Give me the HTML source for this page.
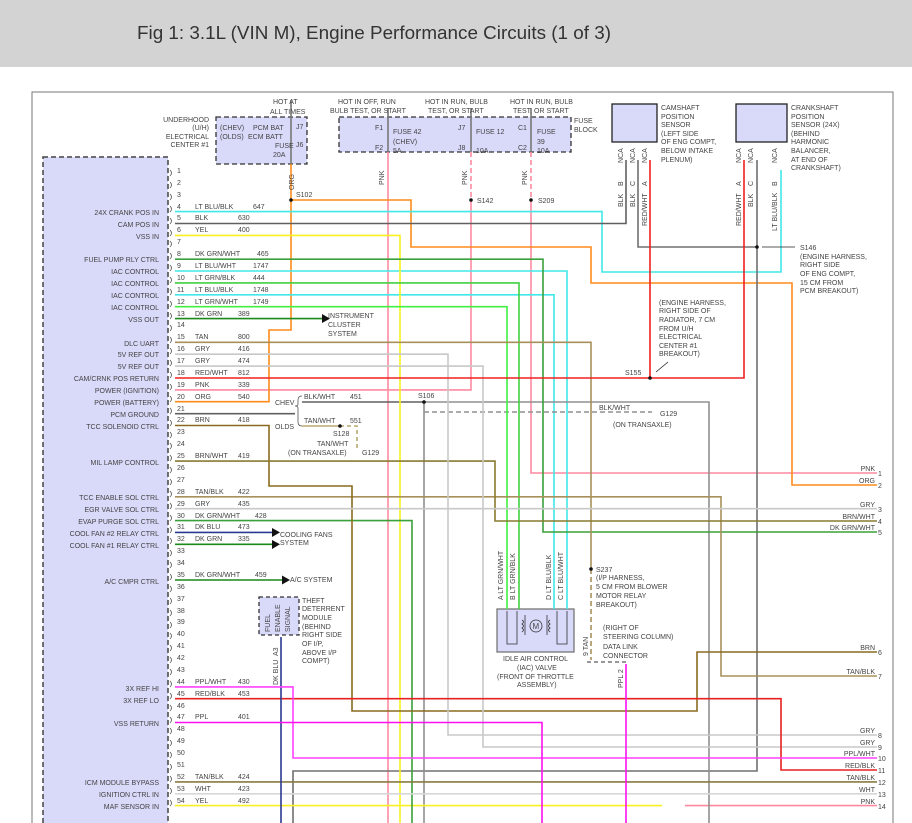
<!DOCTYPE html>
<html><head><meta charset="utf-8"><style>
html,body{margin:0;padding:0;background:#fff;width:912px;height:823px;overflow:hidden}
svg{display:block}
text{font-family:"Liberation Sans",sans-serif;font-size:7px;fill:#444}
.t{font-size:7px}
.r{text-anchor:end}
</style></head><body>
<svg width="912" height="823" viewBox="0 0 912 823" xmlns="http://www.w3.org/2000/svg">
<rect x="0" y="0" width="912" height="67" fill="#d3d3d3"/>
<text x="137" y="39" style="font-size:18px;fill:#333" textLength="474" lengthAdjust="spacingAndGlyphs">Fig 1: 3.1L (VIN M), Engine Performance Circuits (1 of 3)</text>
<rect x="32" y="92" width="861" height="740" fill="none" stroke="#777" stroke-width="1"/>

<!-- PCM box -->
<rect x="43" y="157" width="125" height="680" fill="#d9d9fa" stroke="#444" stroke-width="1.5" stroke-dasharray="5,3"/>

<!-- boxes -->
<rect x="216" y="117" width="91" height="47" fill="#d9d9fa" stroke="#333" stroke-width="1.3" stroke-dasharray="5,3"/>
<rect x="339" y="117" width="232" height="35" fill="#d9d9fa" stroke="#333" stroke-width="1.3" stroke-dasharray="5,3"/>
<rect x="612" y="104" width="45" height="38" fill="#d9d9fa" stroke="#222" stroke-width="1.3"/>
<rect x="736" y="104" width="51" height="38" fill="#d9d9fa" stroke="#222" stroke-width="1.3"/>
<rect x="497" y="609" width="77" height="43" fill="#d9d9fa" stroke="#777" stroke-width="1.3"/>
<rect x="259" y="597" width="40" height="38" fill="#d9d9fa" stroke="#333" stroke-width="1.3" stroke-dasharray="4,3"/>

<g fill="none" stroke-width="1.6">
<!-- pink -->
<polyline stroke="#ff8aa0" points="388,152 388,830"/>
<polyline stroke="#ff8aa0" points="471,152 471,200" stroke-dasharray="5,3"/>
<polyline stroke="#ff8aa0" points="531,152 531,200" stroke-dasharray="5,3"/>
<polyline stroke="#ff8aa0" points="175,389.9 471,389.9 471,200"/>
<polyline stroke="#ff8aa0" points="531,200 531,473 877,473"/>
<polyline stroke="#ff8aa0" points="685,805.6 877,805.6"/>
<!-- orange -->
<polyline stroke="#ff8c1a" points="291,164 291,330 269,330 269,401.7 175,401.7"/>
<polyline stroke="#ff8c1a" points="291,200 411,200 411,247 591,247 591,283 792,283 792,485 877,485"/>
<!-- cyan -->
<polyline stroke="#40e8e8" points="175,211.6 602,211.6 602,272 781,272 781,170"/>
<polyline stroke="#40e8e8" points="175,271 567,271 567,609"/>
<polyline stroke="#40e8e8" points="175,294.8 554,294.8 554,609"/>
<!-- black/dark gray -->
<polyline stroke="#606060" points="175,223.5 626,223.5 626,160"/>
<polyline stroke="#707070" points="638,160 638,247 757,247"/>
<polyline stroke="#707070" points="757,160 757,771 293,771 293,830"/>
<polyline stroke="#606060" points="175,413.7 295,413.7"/>
<polyline stroke="#606060" points="302,402 424,402"/>
<polyline stroke="#909090" points="424,402 709,402 709,830"/>
<polyline stroke="#909090" points="424,402 424,830"/>
<polyline stroke="#909090" points="424,412 652,412" stroke-dasharray="5,3"/>
<!-- yellow -->
<polyline stroke="#f8f020" points="175,235.4 400,235.4 400,830"/>
<polyline stroke="#f8f020" points="175,805.6 662,805.6"/>
<!-- greens -->
<polyline stroke="#3aa03a" points="175,259.2 543,259.2 543,532 877,532"/>
<polyline stroke="#40d040" points="175,282.9 519,282.9 519,609"/>
<polyline stroke="#40f040" points="175,306.7 507,306.7 507,609"/>
<polyline stroke="#1a8a1a" points="175,318.6 322,318.6"/>
<polyline stroke="#3aa03a" points="175,520.6 412,520.6 412,830"/>
<polyline stroke="#1a8a1a" points="175,544.3 272,544.3"/>
<polyline stroke="#1a8a1a" points="175,580 282,580"/>
<!-- tan -->
<polyline stroke="#a8905a" points="175,342.3 591,342.3 591,569"/>
<polyline stroke="#a8905a" points="591,569 591,660" stroke-dasharray="5,3"/>
<polyline stroke="#a8905a" points="175,496.8 721,496.8 721,676 877,676"/>
<polyline stroke="#8a7a40" points="175,781.9 877,781.9"/>
<polyline stroke="#b8a870" points="302,426 340,426"/>
<polyline stroke="#b8a870" points="340,426 357,426 357,448" stroke-dasharray="4,3"/>
<!-- brown -->
<polyline stroke="#8a6a20" points="175,425.5 269,425.5 269,486 352,486 352,711 697,711 697,652 877,652"/>
<polyline stroke="#8a7a30" points="175,461.1 495,461.1 495,521 877,521"/>
<!-- grays -->
<polyline stroke="#c8c8c8" points="175,354.2 448,354.2 448,735 877,735"/>
<polyline stroke="#c8c8c8" points="175,366.1 483,366.1 483,747 877,747"/>
<polyline stroke="#c8c8c8" points="175,508.7 877,508.7"/>
<polyline stroke="#d8d8d8" points="175,793.8 877,793.8"/>
<!-- red -->
<polyline stroke="#f02020" points="175,378 744,378 744,160"/>
<polyline stroke="#f02020" points="650,160 650,378"/>
<polyline stroke="#e82020" points="175,698.7 781,698.7 781,770 877,770"/>
<!-- blue -->
<polyline stroke="#2a3a90" points="175,532.4 272,532.4"/>
<polyline stroke="#2a3a90" points="281,637 281,830"/>
<!-- magenta -->
<polyline stroke="#ff40ff" points="175,686.9 293,686.9 293,758 877,758"/>
<polyline stroke="#ff10f0" points="175,722.5 542,722.5 542,830"/>
<polyline stroke="#ff10f0" points="626,664 626,830"/>
<!-- fuse lines -->
<polyline stroke="#777" points="291,100 291,164"/>
<polyline stroke="#777" points="388,108 388,152"/>
<polyline stroke="#777" points="471,108 471,152"/>
<polyline stroke="#777" points="531,108 531,152"/>
<polyline stroke="#777" points="587,662 628,662" stroke-dasharray="4,3"/>
</g>
<!-- arrows -->
<g fill="#111">
<polygon points="322,314 330,318.6 322,323"/>
<polygon points="272,528 280,532.4 272,537"/>
<polygon points="272,540 280,544.3 272,549"/>
<polygon points="282,575.5 290,580 282,584.5"/>
<circle cx="291" cy="200" r="1.8"/><circle cx="471" cy="200" r="1.8"/><circle cx="531" cy="200" r="1.8"/>
<circle cx="757" cy="247" r="1.8"/><circle cx="650" cy="378" r="1.8"/><circle cx="424" cy="402" r="1.8"/>
<circle cx="340" cy="426" r="1.8"/><circle cx="591" cy="569" r="1.8"/>
</g>
<line x1="762" y1="247" x2="795" y2="247" stroke="#222" stroke-width="0.8"/>
<line x1="656" y1="372" x2="668" y2="362" stroke="#222" stroke-width="0.8"/>

<!-- PCM pin numbers -->
<g>
<text x="177" y="173">1</text><text x="177" y="185">2</text><text x="177" y="197">3</text><text x="177" y="209">4</text><text x="177" y="220">5</text><text x="177" y="232">6</text><text x="177" y="244">7</text><text x="177" y="256">8</text><text x="177" y="268">9</text><text x="177" y="280">10</text><text x="177" y="292">11</text><text x="177" y="304">12</text><text x="177" y="316">13</text><text x="177" y="327">14</text><text x="177" y="339">15</text><text x="177" y="351">16</text><text x="177" y="363">17</text><text x="177" y="375">18</text><text x="177" y="387">19</text><text x="177" y="399">20</text><text x="177" y="411">21</text><text x="177" y="422">22</text><text x="177" y="434">23</text><text x="177" y="446">24</text><text x="177" y="458">25</text><text x="177" y="470">26</text><text x="177" y="482">27</text><text x="177" y="494">28</text><text x="177" y="506">29</text><text x="177" y="518">30</text><text x="177" y="529">31</text><text x="177" y="541">32</text><text x="177" y="553">33</text><text x="177" y="565">34</text><text x="177" y="577">35</text><text x="177" y="589">36</text><text x="177" y="601">37</text><text x="177" y="613">38</text><text x="177" y="624">39</text><text x="177" y="636">40</text><text x="177" y="648">41</text><text x="177" y="660">42</text><text x="177" y="672">43</text><text x="177" y="684">44</text><text x="177" y="696">45</text><text x="177" y="708">46</text><text x="177" y="719">47</text><text x="177" y="731">48</text><text x="177" y="743">49</text><text x="177" y="755">50</text><text x="177" y="767">51</text><text x="177" y="779">52</text><text x="177" y="791">53</text><text x="177" y="803">54</text>
</g>
<g fill="none" stroke="#555" stroke-width="0.8">
<path d="M170,170 q3,3 0,6 M170,182 q3,3 0,6 M170,194 q3,3 0,6 M170,206 q3,3 0,6 M170,218 q3,3 0,6 M170,230 q3,3 0,6 M170,241 q3,3 0,6 M170,253 q3,3 0,6 M170,265 q3,3 0,6 M170,277 q3,3 0,6 M170,289 q3,3 0,6 M170,301 q3,3 0,6 M170,313 q3,3 0,6 M170,325 q3,3 0,6 M170,337 q3,3 0,6 M170,348 q3,3 0,6 M170,360 q3,3 0,6 M170,372 q3,3 0,6 M170,384 q3,3 0,6 M170,396 q3,3 0,6 M170,408 q3,3 0,6 M170,420 q3,3 0,6 M170,432 q3,3 0,6 M170,443 q3,3 0,6 M170,455 q3,3 0,6 M170,467 q3,3 0,6 M170,479 q3,3 0,6 M170,491 q3,3 0,6 M170,503 q3,3 0,6 M170,515 q3,3 0,6 M170,527 q3,3 0,6 M170,538 q3,3 0,6 M170,550 q3,3 0,6 M170,562 q3,3 0,6 M170,574 q3,3 0,6 M170,586 q3,3 0,6 M170,598 q3,3 0,6 M170,610 q3,3 0,6 M170,622 q3,3 0,6 M170,633 q3,3 0,6 M170,645 q3,3 0,6 M170,657 q3,3 0,6 M170,669 q3,3 0,6 M170,681 q3,3 0,6 M170,693 q3,3 0,6 M170,705 q3,3 0,6 M170,717 q3,3 0,6 M170,728 q3,3 0,6 M170,740 q3,3 0,6 M170,752 q3,3 0,6 M170,764 q3,3 0,6 M170,776 q3,3 0,6 M170,788 q3,3 0,6 M170,800 q3,3 0,6"/>
<path d="M302,396 q-4,0 -4,4 v4 q0,2 -3,2 q3,0 3,2 v14 q0,4 4,4"/>
</g>

<!-- function labels -->
<g class="r">
<text class="r" x="159" y="215">24X CRANK POS IN</text>
<text class="r" x="159" y="227">CAM POS IN</text>
<text class="r" x="159" y="239">VSS IN</text>
<text class="r" x="159" y="262">FUEL PUMP RLY CTRL</text>
<text class="r" x="159" y="274">IAC CONTROL</text>
<text class="r" x="159" y="286">IAC CONTROL</text>
<text class="r" x="159" y="298">IAC CONTROL</text>
<text class="r" x="159" y="310">IAC CONTROL</text>
<text class="r" x="159" y="322">VSS OUT</text>
<text class="r" x="159" y="346">DLC UART</text>
<text class="r" x="159" y="357">5V REF OUT</text>
<text class="r" x="159" y="369">5V REF OUT</text>
<text class="r" x="159" y="381">CAM/CRNK POS RETURN</text>
<text class="r" x="159" y="393">POWER (IGNITION)</text>
<text class="r" x="159" y="405">POWER (BATTERY)</text>
<text class="r" x="159" y="417">PCM GROUND</text>
<text class="r" x="159" y="429">TCC SOLENOID CTRL</text>
<text class="r" x="159" y="465">MIL LAMP CONTROL</text>
<text class="r" x="159" y="500">TCC ENABLE SOL CTRL</text>
<text class="r" x="159" y="512">EGR VALVE SOL CTRL</text>
<text class="r" x="159" y="524">EVAP PURGE SOL CTRL</text>
<text class="r" x="159" y="536">COOL FAN #2 RELAY CTRL</text>
<text class="r" x="159" y="548">COOL FAN #1 RELAY CTRL</text>
<text class="r" x="159" y="584">A/C CMPR CTRL</text>
<text class="r" x="159" y="691">3X REF HI</text>
<text class="r" x="159" y="703">3X REF LO</text>
<text class="r" x="159" y="726">VSS RETURN</text>
<text class="r" x="159" y="785">ICM MODULE BYPASS</text>
<text class="r" x="159" y="797">IGNITION CTRL IN</text>
<text class="r" x="159" y="809">MAF SENSOR IN</text>
</g>

<!-- wire labels -->
<g>
<text x="195" y="209">LT BLU/BLK</text><text x="253" y="209">647</text>
<text x="195" y="220">BLK</text><text x="238" y="220">630</text>
<text x="195" y="232">YEL</text><text x="238" y="232">400</text>
<text x="195" y="256">DK GRN/WHT</text><text x="257" y="256">465</text>
<text x="195" y="268">LT BLU/WHT</text><text x="253" y="268">1747</text>
<text x="195" y="280">LT GRN/BLK</text><text x="253" y="280">444</text>
<text x="195" y="292">LT BLU/BLK</text><text x="253" y="292">1748</text>
<text x="195" y="304">LT GRN/WHT</text><text x="253" y="304">1749</text>
<text x="195" y="316">DK GRN</text><text x="238" y="316">389</text>
<text x="195" y="339">TAN</text><text x="238" y="339">800</text>
<text x="195" y="351">GRY</text><text x="238" y="351">416</text>
<text x="195" y="363">GRY</text><text x="238" y="363">474</text>
<text x="195" y="375">RED/WHT</text><text x="238" y="375">812</text>
<text x="195" y="387">PNK</text><text x="238" y="387">339</text>
<text x="195" y="399">ORG</text><text x="238" y="399">540</text>
<text x="195" y="422">BRN</text><text x="238" y="422">418</text>
<text x="195" y="458">BRN/WHT</text><text x="238" y="458">419</text>
<text x="195" y="494">TAN/BLK</text><text x="238" y="494">422</text>
<text x="195" y="506">GRY</text><text x="238" y="506">435</text>
<text x="195" y="518">DK GRN/WHT</text><text x="255" y="518">428</text>
<text x="195" y="529">DK BLU</text><text x="238" y="529">473</text>
<text x="195" y="541">DK GRN</text><text x="238" y="541">335</text>
<text x="195" y="577">DK GRN/WHT</text><text x="255" y="577">459</text>
<text x="195" y="684">PPL/WHT</text><text x="238" y="684">430</text>
<text x="195" y="696">RED/BLK</text><text x="238" y="696">453</text>
<text x="195" y="719">PPL</text><text x="238" y="719">401</text>
<text x="195" y="779">TAN/BLK</text><text x="238" y="779">424</text>
<text x="195" y="791">WHT</text><text x="238" y="791">423</text>
<text x="195" y="803">YEL</text><text x="238" y="803">492</text>
</g>

<!-- misc labels -->
<g>
<text x="273" y="104">HOT AT</text><text x="270" y="114">ALL TIMES</text>
<text class="r" x="209" y="122">UNDERHOOD</text><text class="r" x="209" y="130">(U/H)</text><text class="r" x="209" y="139">ELECTRICAL</text><text class="r" x="209" y="147">CENTER #1</text>
<text x="220" y="130">(CHEV)</text><text x="253" y="130">PCM BAT</text>
<text x="220" y="139">(OLDS)</text><text x="248" y="139">ECM BATT</text>
<text x="275" y="148">FUSE</text><text x="273" y="157">20A</text>
<text x="296" y="129">J7</text><text x="296" y="147">J6</text>
<text x="296" y="197">S102</text>
<text x="338" y="104">HOT IN OFF, RUN</text><text x="330" y="113">BULB TEST, OR START</text>
<text x="425" y="104">HOT IN RUN, BULB</text><text x="428" y="113">TEST, OR START</text>
<text x="510" y="104">HOT IN RUN, BULB</text><text x="513" y="113">TEST, OR START</text>
<text x="574" y="123">FUSE</text><text x="574" y="132">BLOCK</text>
<text x="375" y="130">F1</text><text x="375" y="150">F2</text><text x="393" y="134">FUSE 42</text><text x="393" y="144">(CHEV)</text><text x="393" y="153">5A</text>
<text x="458" y="130">J7</text><text x="458" y="150">J8</text><text x="476" y="134">FUSE 12</text><text x="476" y="153">10A</text>
<text x="518" y="130">C1</text><text x="518" y="150">C2</text><text x="537" y="134">FUSE</text><text x="537" y="144">39</text><text x="537" y="153">10A</text>
<text x="477" y="203">S142</text><text x="538" y="203">S209</text>
<text x="661" y="110">CAMSHAFT</text><text x="661" y="119">POSITION</text><text x="661" y="127">SENSOR</text><text x="661" y="136">(LEFT SIDE</text><text x="661" y="144">OF ENG COMPT,</text><text x="661" y="153">BELOW INTAKE</text><text x="661" y="162">PLENUM)</text>
<text x="791" y="110">CRANKSHAFT</text><text x="791" y="119">POSITION</text><text x="791" y="127">SENSOR (24X)</text><text x="791" y="136">(BEHIND</text><text x="791" y="144">HARMONIC</text><text x="791" y="153">BALANCER,</text><text x="791" y="162">AT END OF</text><text x="791" y="170">CRANKSHAFT)</text>
<text x="800" y="250">S146</text><text x="800" y="259">(ENGINE HARNESS,</text><text x="800" y="267">RIGHT SIDE</text><text x="800" y="276">OF ENG COMPT,</text><text x="800" y="285">15 CM FROM</text><text x="800" y="293">PCM BREAKOUT)</text>
<text x="659" y="305">(ENGINE HARNESS,</text><text x="659" y="313">RIGHT SIDE OF</text><text x="659" y="322">RADIATOR, 7 CM</text><text x="659" y="331">FROM U/H</text><text x="659" y="339">ELECTRICAL</text><text x="659" y="348">CENTER #1</text><text x="659" y="356">BREAKOUT)</text>
<text x="625" y="375">S155</text>
<text x="328" y="318">INSTRUMENT</text><text x="328" y="327">CLUSTER</text><text x="328" y="336">SYSTEM</text>
<text x="275" y="405">CHEV</text><text x="275" y="429">OLDS</text>
<text x="304" y="399">BLK/WHT</text><text x="350" y="399">451</text>
<text x="304" y="423">TAN/WHT</text><text x="350" y="423">551</text>
<text x="333" y="436">S128</text><text x="317" y="446">TAN/WHT</text><text x="288" y="455">(ON TRANSAXLE)</text><text x="362" y="455">G129</text>
<text x="418" y="398">S106</text>
<text x="599" y="410">BLK/WHT</text><text x="660" y="416">G129</text><text x="613" y="427">(ON TRANSAXLE)</text>
<text x="280" y="537">COOLING FANS</text><text x="280" y="545">SYSTEM</text>
<text x="290" y="582">A/C SYSTEM</text>
<text x="302" y="603">THEFT</text><text x="302" y="611">DETERRENT</text><text x="302" y="620">MODULE</text><text x="302" y="629">(BEHIND</text><text x="302" y="637">RIGHT SIDE</text><text x="302" y="646">OF I/P,</text><text x="302" y="655">ABOVE I/P</text><text x="302" y="663">COMPT)</text>
<text x="596" y="572">S237</text><text x="596" y="580">(I/P HARNESS,</text><text x="596" y="589">5 CM FROM BLOWER</text><text x="596" y="598">MOTOR RELAY</text><text x="596" y="607">BREAKOUT)</text>
<text x="603" y="630">(RIGHT OF</text><text x="603" y="639">STEERING COLUMN)</text><text x="603" y="649">DATA LINK</text><text x="603" y="658">CONNECTOR</text>
<text x="503" y="661">IDLE AIR CONTROL</text><text x="517" y="670">(IAC) VALVE</text><text x="497" y="679">(FRONT OF THROTTLE</text><text x="517" y="687">ASSEMBLY)</text>
<!-- right side -->
<text class="r" x="875" y="471">PNK</text><text x="878" y="476">1</text>
<text class="r" x="875" y="483">ORG</text><text x="878" y="488">2</text>
<text class="r" x="875" y="507">GRY</text><text x="878" y="512">3</text>
<text class="r" x="875" y="519">BRN/WHT</text><text x="878" y="524">4</text>
<text class="r" x="875" y="530">DK GRN/WHT</text><text x="878" y="535">5</text>
<text class="r" x="875" y="650">BRN</text><text x="878" y="655">6</text>
<text class="r" x="875" y="674">TAN/BLK</text><text x="878" y="679">7</text>
<text class="r" x="875" y="733">GRY</text><text x="878" y="738">8</text>
<text class="r" x="875" y="745">GRY</text><text x="878" y="750">9</text>
<text class="r" x="875" y="756">PPL/WHT</text><text x="878" y="761">10</text>
<text class="r" x="875" y="768">RED/BLK</text><text x="878" y="773">11</text>
<text class="r" x="875" y="780">TAN/BLK</text><text x="878" y="785">12</text>
<text class="r" x="875" y="792">WHT</text><text x="878" y="797">13</text>
<text class="r" x="875" y="804">PNK</text><text x="878" y="809">14</text>
</g>
<!-- rotated labels -->
<g>
<text transform="translate(294,190) rotate(-90)">ORG</text>
<text transform="translate(384,185) rotate(-90)">PNK</text>
<text transform="translate(467,185) rotate(-90)">PNK</text>
<text transform="translate(527,185) rotate(-90)">PNK</text>
<text transform="translate(623,163) rotate(-90)">NCA</text>
<text transform="translate(635,163) rotate(-90)">NCA</text>
<text transform="translate(647,163) rotate(-90)">NCA</text>
<text transform="translate(741,163) rotate(-90)">NCA</text>
<text transform="translate(753,163) rotate(-90)">NCA</text>
<text transform="translate(777,163) rotate(-90)">NCA</text>
<text transform="translate(623,186) rotate(-90)">B</text><text transform="translate(635,186) rotate(-90)">C</text><text transform="translate(647,186) rotate(-90)">A</text>
<text transform="translate(741,186) rotate(-90)">A</text><text transform="translate(753,186) rotate(-90)">C</text><text transform="translate(777,186) rotate(-90)">B</text>
<text transform="translate(623,207) rotate(-90)">BLK</text>
<text transform="translate(635,207) rotate(-90)">BLK</text>
<text transform="translate(647,226) rotate(-90)">RED/WHT</text>
<text transform="translate(741,226) rotate(-90)">RED/WHT</text>
<text transform="translate(753,207) rotate(-90)">BLK</text>
<text transform="translate(777,231) rotate(-90)">LT BLU/BLK</text>
<text transform="translate(503,600) rotate(-90)">A  LT GRN/WHT</text>
<text transform="translate(515,600) rotate(-90)">B  LT GRN/BLK</text>
<text transform="translate(551,600) rotate(-90)">D  LT BLU/BLK</text>
<text transform="translate(563,600) rotate(-90)">C  LT BLU/WHT</text>
<text transform="translate(588,656) rotate(-90)">9  TAN</text>
<text transform="translate(623,688) rotate(-90)">PPL  2</text>
<text transform="translate(278,656) rotate(-90)">A3</text>
<text transform="translate(278,685) rotate(-90)">DK BLU</text>
<text transform="translate(270,632) rotate(-90)">FUEL</text>
<text transform="translate(280,632) rotate(-90)">ENABLE</text>
<text transform="translate(290,632) rotate(-90)">SIGNAL</text>
</g>
<!-- IAC motor -->
<g fill="none" stroke="#333" stroke-width="0.8">
<path d="M507,611 v33 h10 v-33 M567,611 v33 h-10 v-33"/>
<circle cx="536" cy="626" r="6"/>
<path d="M522,620 q3,2 0,4 q3,2 0,4 q3,2 0,4 M550,620 q-3,2 0,4 q-3,2 0,4 q-3,2 0,4 M525,615 v20 M547,615 v20"/>
</g>
<text x="532.5" y="629" style="font-size:8px">M</text>
</svg>
</body></html>
